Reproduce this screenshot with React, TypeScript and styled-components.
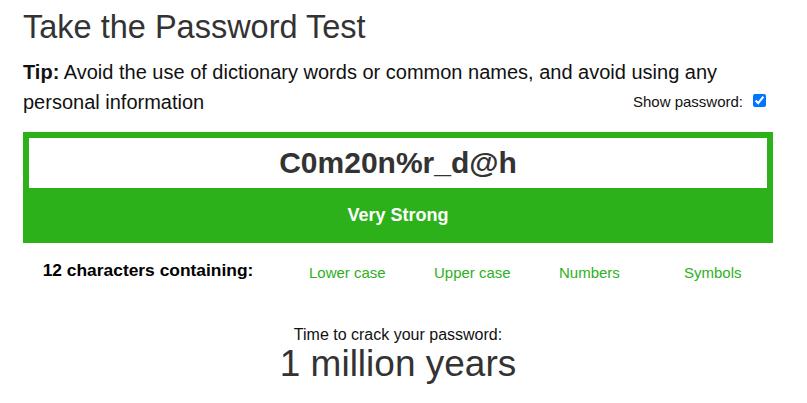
import React from "react";
import styled, { createGlobalStyle } from "styled-components";

const Global = createGlobalStyle`
  html, body { margin: 0; padding: 0; background: #fff; }
  body { font-family: "Liberation Sans", Arial, sans-serif; color: #111; }
`;

const GREEN = "#2db11b";

const Page = styled.div`
  width: 750px;
  margin-left: 23px;
  padding-top: 9px;
`;

const Title = styled.h1`
  margin: 0;
  font-size: 32.5px;
  line-height: 37px;
  font-weight: normal;
  color: #333;
`;

const Tip = styled.p`
  margin: 11px 0 0;
  font-size: 20px;
  line-height: 30px;
  color: #111;
  &::after { content: ""; display: block; clear: both; }
`;

const ShowToggle = styled.label`
  float: right;
  display: flex;
  align-items: center;
  gap: 10px;
  font-size: 15px;
  line-height: 17px;
  padding-top: 6px;
  margin-right: 7px;
  color: #111;
  input { margin: 0; width: 13px; height: 13px; accent-color: #0075ff; position: relative; top: -1px; }
`;

const Meter = styled.div`
  margin-top: 15px;
  border: 6px solid ${GREEN};
  border-bottom: none;
  background: ${GREEN};
`;

const PasswordField = styled.div`
  height: 50px;
  background: #fff;
  display: flex;
  align-items: center;
  justify-content: center;
  font-size: 30px;
  font-weight: bold;
  color: #333;
`;

const Strength = styled.div`
  height: 55px;
  display: flex;
  align-items: center;
  justify-content: center;
  color: #fff;
  font-weight: bold;
  font-size: 18px;
`;

const Criteria = styled.div`
  display: flex;
  align-items: baseline;
  margin-top: 17px;
`;

const CriteriaLabel = styled.div`
  flex: 0 0 250px;
  text-align: center;
  font-weight: bold;
  font-size: 17.4px;
  color: #000;
`;

const CriteriaList = styled.div`
  display: flex;
  flex-shrink: 0;
  margin-left: 36px;
`;

const CriteriaItem = styled.div<{ $met: boolean }>`
  flex: 0 0 125px;
  font-size: 15px;
  color: ${(p) => (p.$met ? GREEN : "#999")};
  position: relative;
  top: 2px;
`;

const Crack = styled.div`
  margin-top: 45px;
  text-align: center;
`;

const CrackLabel = styled.div`
  font-size: 16px;
  line-height: 18px;
  color: #111;
`;

const CrackValue = styled.div`
  font-size: 37px;
  line-height: 40px;
  color: #333;
`;

export default function App() {
  const criteria = ["Lower case", "Upper case", "Numbers", "Symbols"];
  return (
    <>
      <Global />
      <Page>
        <Title>Take the Password Test</Title>
        <Tip>
          <b>Tip:</b> Avoid the use of dictionary words or common names, and avoid using any personal information
          <ShowToggle>
            Show password:
            <input type="checkbox" defaultChecked />
          </ShowToggle>
        </Tip>
        <Meter>
          <PasswordField>C0m20n%r_d@h</PasswordField>
          <Strength>Very Strong</Strength>
        </Meter>
        <Criteria>
          <CriteriaLabel>12 characters containing:</CriteriaLabel>
          <CriteriaList>
            {criteria.map((c) => (
              <CriteriaItem key={c} $met>
                {c}
              </CriteriaItem>
            ))}
          </CriteriaList>
        </Criteria>
        <Crack>
          <CrackLabel>Time to crack your password:</CrackLabel>
          <CrackValue>1 million years</CrackValue>
        </Crack>
      </Page>
    </>
  );
}
